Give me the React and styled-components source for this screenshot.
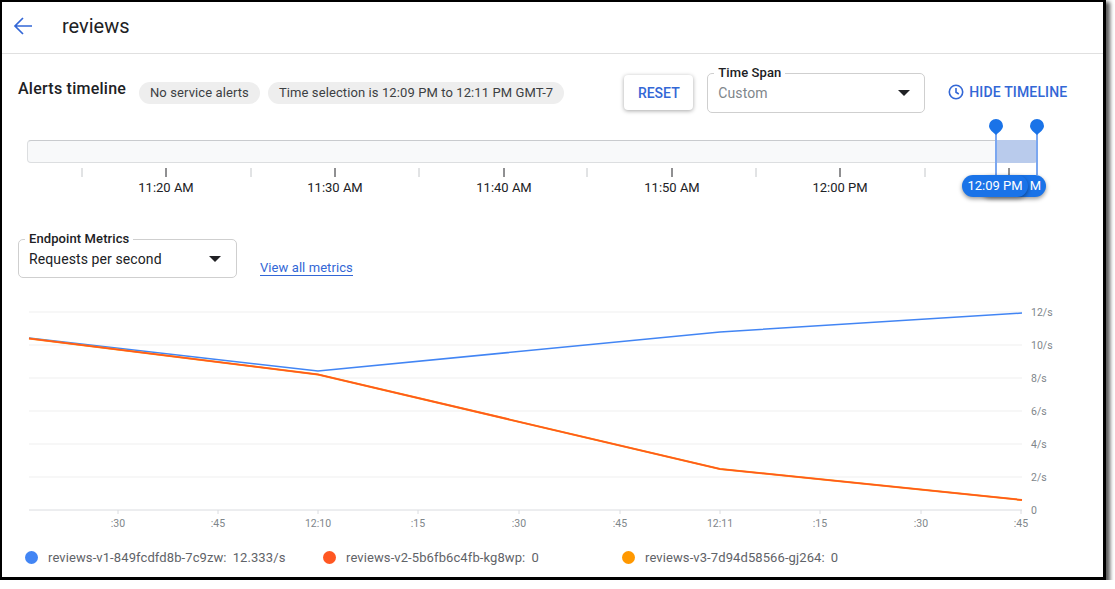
import React from "react";
import styled, { createGlobalStyle } from "styled-components";

const GlobalStyle = createGlobalStyle`
  html, body {
    margin: 0;
    padding: 0;
    background: #fff;
    font-family: Roboto, "Liberation Sans", sans-serif;
    color: #202124;
  }
`;

const blue = "#3367d6";

const Frame = styled.div`
  box-sizing: border-box;
  width: 1106px;
  height: 580px;
  border: 2px solid #000;
  border-width: 2px 3px 3px 2px;
  background: #fff;
  box-shadow: 3px 3px 4px 1px rgba(0, 0, 0, 0.65);
  overflow: hidden;
`;

const Header = styled.header`
  display: flex;
  align-items: center;
  height: 52px;
  box-sizing: border-box;
  padding: 0 0 4px 11px;
  border-bottom: 1px solid #e0e0e0;
`;

const BackButton = styled.svg`
  width: 20px;
  height: 20px;
  color: ${blue};
`;

const PageTitle = styled.h1`
  margin: 0 0 0 29px;
  font-size: 20px;
  font-weight: 400;
`;

const Toolbar = styled.div`
  display: flex;
  align-items: flex-start;
  box-sizing: border-box;
  height: 60px;
  padding: 19px 0 0 16px;
`;

const SectionTitle = styled.h2`
  margin: 6px 0 0;
  width: 121px;
  font-size: 16px;
  line-height: 19px;
  font-weight: 500;
  letter-spacing: 0.25px;
  white-space: nowrap;
`;

const Chip = styled.span`
  margin: 9px 8px 0 0;
  padding: 0 11px;
  height: 22px;
  line-height: 22px;
  border-radius: 11px;
  background: #eeeeee;
  font-size: 13px;
  letter-spacing: 0.1px;
  color: #3c4043;
  white-space: nowrap;
`;

const ResetButton = styled.button`
  margin: 2px 14px 0 52px;
  width: 69px;
  height: 35px;
  border: 0;
  border-radius: 4px;
  background: #fff;
  box-shadow: 0 1px 4px rgba(0, 0, 0, 0.35);
  color: ${blue};
  font: 500 14px Roboto, sans-serif;
`;

const Field = styled.div`
  position: relative;
  box-sizing: border-box;
  display: flex;
  align-items: center;
  justify-content: space-between;
  width: ${(p) => p.$width}px;
  height: ${(p) => p.$height}px;
  padding: ${(p) => p.$pad};
  border: 1px solid #cfcfcf;
  border-radius: 5px;
  font-size: 14px;
  letter-spacing: 0.1px;
  color: ${(p) => (p.$muted ? "#80868b" : "#202124")};
`;

const FieldLabel = styled.span`
  position: absolute;
  left: 6px;
  top: -9px;
  padding: 0 4px;
  background: #fff;
  font-size: 13px;
  line-height: 15px;
  font-weight: 500;
  color: #202124;
  white-space: nowrap;
`;

const Caret = styled.i`
  width: 0;
  height: 0;
  border-left: 6px solid transparent;
  border-right: 6px solid transparent;
  border-top: 6px solid #202124;
`;

const ToggleLink = styled.span`
  display: flex;
  align-items: center;
  gap: 5px;
  margin: 10px 0 0 23px;
  color: ${blue};
  font-size: 14px;
  line-height: 18px;
  font-weight: 500;
  letter-spacing: 0.15px;
  white-space: nowrap;
`;

const Timeline = styled.section`
  position: relative;
  margin: 26px 0 0 25px;
  width: 1030px;
  height: 99px;
`;

const Track = styled.div`
  box-sizing: border-box;
  width: 1011px;
  height: 23px;
  border: 1px solid #dcdee0;
  border-top-color: #c9cbce;
  border-radius: 4px;
  background: #f8f9fa;
`;

const Axis = styled.svg`
  display: block;
  width: 1030px;
  height: 36px;
  overflow: visible;
`;

const AxisLabel = styled.text`
  font-size: ${(p) => p.$size || 13}px;
  fill: ${(p) => p.$fill || "#202124"};
  text-anchor: ${(p) => p.$anchor || "middle"};
`;

const Selection = styled.div`
  position: absolute;
  left: 969px;
  top: 0;
  width: 41px;
  height: 23px;
  box-sizing: border-box;
  background: #b9cbec;
  border-radius: 0 4px 4px 0;
`;

const PinLine = styled.div`
  position: absolute;
  left: ${(p) => p.$x}px;
  top: -11px;
  width: 1.5px;
  height: 46px;
  background: #7ba7f0;
`;

const PinHead = styled.svg`
  position: absolute;
  left: ${(p) => p.$x - 7}px;
  top: -21px;
  width: 14px;
  height: 16px;
`;

const TimePill = styled.div`
  position: absolute;
  top: 35px;
  left: ${(p) => p.$x}px;
  box-sizing: border-box;
  width: ${(p) => p.$width}px;
  height: 22px;
  padding: ${(p) => p.$pad};
  line-height: 22px;
  border-radius: 11px;
  background: #1a73e8;
  box-shadow: 0 2px 4px rgba(0, 0, 0, 0.4);
  color: #fff;
  font-size: 13px;
  text-align: ${(p) => p.$align};
  white-space: nowrap;
`;

const MetricsBar = styled.div`
  display: flex;
  align-items: flex-start;
  height: 39px;
  margin: 0 0 0 16px;
`;

const MetricsLink = styled.a`
  margin: 21px 0 0 23px;
  color: ${blue};
  font-size: 13px;
  line-height: 15px;
  letter-spacing: 0.08px;
  border-bottom: 1px solid ${blue};
`;

const Chart = styled.svg`
  display: block;
  margin-top: 17px;
  width: 1100px;
  height: 240px;
`;

const Legend = styled.ul`
  display: flex;
  margin: 15px 0 0;
  padding: 0 0 0 23px;
  list-style: none;
`;

const LegendItem = styled.li`
  display: flex;
  align-items: center;
  width: ${(p) => p.$width}px;
  font-size: 13px;
  letter-spacing: 0.1px;
  color: #5f6368;
  white-space: nowrap;
`;

const Dot = styled.i`
  width: 13px;
  height: 13px;
  margin-right: 10px;
  border-radius: 50%;
  background: ${(p) => p.$color};
`;

const LegendValue = styled.span`
  margin-left: 6px;
`;

const majorTicks = [
  [166, "11:20 AM"],
  [335, "11:30 AM"],
  [504, "11:40 AM"],
  [672, "11:50 AM"],
  [840, "12:00 PM"],
  [1009, ""],
];
const minorTicks = [82, 251, 419, 587, 756, 925];

const gridLines = [
  [312, "12/s"],
  [345, "10/s"],
  [378, "8/s"],
  [411, "6/s"],
  [444, "4/s"],
  [477, "2/s"],
  [510, "0"],
];

const xLabels = [
  [118, ":30"],
  [218, ":45"],
  [318, "12:10"],
  [418, ":15"],
  [519, ":30"],
  [620, ":45"],
  [720, "12:11"],
  [820, ":15"],
  [921, ":30"],
  [1021, ":45"],
];

// viewBox uses page coordinates, so these read straight off the screenshot
const bluePoints = "29,338 318,371 720,332 1022,313";
const redPoints = "29,338.5 318,374.5 720,469 1022,500";

const Pin = ({ x }) => (
  <>
    <PinLine $x={x - 0.75} />
    <PinHead $x={x} viewBox="0 0 14 16">
      <path d="M7 0a7 7 0 0 1 7 7c0 3.6-4.4 6.6-7 9-2.6-2.4-7-5.4-7-9a7 7 0 0 1 7-7z" fill="#1a73e8" />
    </PinHead>
  </>
);

const App = () => (
  <Frame>
    <GlobalStyle />
    <Header>
      <BackButton viewBox="0 0 20 20" fill="none" stroke="currentColor" strokeWidth="1.7">
        <path d="M19 10H2M10 2l-8 8 8 8" />
      </BackButton>
      <PageTitle>reviews</PageTitle>
    </Header>

    <Toolbar>
      <SectionTitle>Alerts timeline</SectionTitle>
      <Chip>No service alerts</Chip>
      <Chip>Time selection is 12:09 PM to 12:11 PM GMT-7</Chip>
      <ResetButton>RESET</ResetButton>
      <Field $width={218} $height={40} $pad="0 14px 0 10px" $muted>
        <FieldLabel>Time Span</FieldLabel>
        <span>Custom</span>
        <Caret />
      </Field>
      <ToggleLink>
        <svg width="16" height="16" viewBox="0 0 16 16" fill="none" stroke="currentColor" strokeWidth="1.6">
          <circle cx="8" cy="8" r="6.7" />
          <path d="M8 4v4.3l2.8 1.7" />
        </svg>
        HIDE TIMELINE
      </ToggleLink>
    </Toolbar>

    <Timeline>
      <Track />
      <Axis viewBox="27 163 1030 36">
        {minorTicks.map((x) => (
          <line key={x} x1={x} x2={x} y1="168" y2="177" stroke="#c4c7ca" />
        ))}
        {majorTicks.map(([x, label]) => (
          <g key={x}>
            <line x1={x} x2={x} y1="168" y2="177" stroke="#202124" />
            <AxisLabel x={x} y="192">{label}</AxisLabel>
          </g>
        ))}
      </Axis>
      <Selection />
      <Pin x={969} />
      <Pin x={1010} />
      <TimePill $x={953} $width={66} $pad="0 5px 0 0" $align="right">M</TimePill>
      <TimePill $x={935} $width={66} $pad="0" $align="center">12:09 PM</TimePill>
    </Timeline>

    <MetricsBar>
      <Field $width={219} $height={39} $pad="0 15px 0 10px">
        <FieldLabel>Endpoint Metrics</FieldLabel>
        <span>Requests per second</span>
        <Caret />
      </Field>
      <MetricsLink>View all metrics</MetricsLink>
    </MetricsBar>

    <Chart viewBox="2 295 1100 240">
      {gridLines.map(([y, label]) => (
        <g key={label}>
          <line x1="29" x2="1022" y1={y} y2={y} stroke={y === 510 ? "#dadce0" : "#efefef"} />
          <AxisLabel x="1031" y={y + 4} $size={10.5} $fill="#80868b" $anchor="start">{label}</AxisLabel>
        </g>
      ))}
      {xLabels.map(([x, label]) => (
        <g key={x}>
          <line x1={x} x2={x} y1="510" y2="514" stroke="#dadce0" />
          <AxisLabel x={x} y="527" $size={10.5} $fill="#80868b">{label}</AxisLabel>
        </g>
      ))}
      <polyline points={bluePoints} fill="none" stroke="#4285f4" strokeWidth="1.5" />
      <polyline points={redPoints} fill="none" stroke="#ff9800" strokeWidth="2" />
      <polyline points={redPoints} fill="none" stroke="#ff5722" strokeWidth="1.5" />
    </Chart>

    <Legend>
      <LegendItem $width={298}>
        <Dot $color="#4285f4" />
        reviews-v1-849fcdfd8b-7c9zw:<LegendValue>12.333/s</LegendValue>
      </LegendItem>
      <LegendItem $width={299}>
        <Dot $color="#ff5722" />
        reviews-v2-5b6fb6c4fb-kg8wp:<LegendValue>0</LegendValue>
      </LegendItem>
      <LegendItem $width={300}>
        <Dot $color="#ff9800" />
        reviews-v3-7d94d58566-gj264:<LegendValue>0</LegendValue>
      </LegendItem>
    </Legend>
  </Frame>
);

export default App;
